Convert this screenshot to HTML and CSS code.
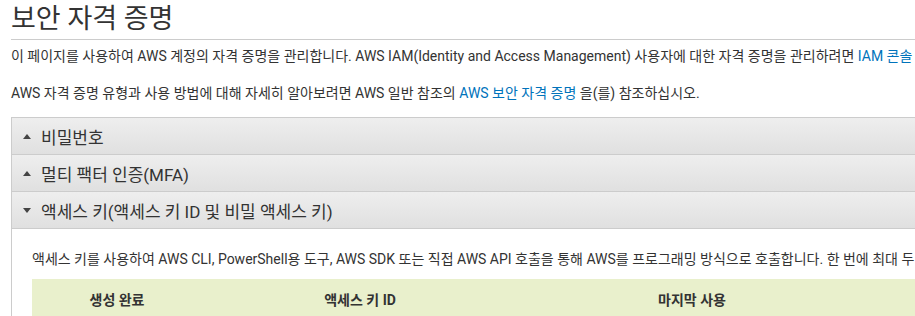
FILE: index.html
```html
<!DOCTYPE html>
<html lang="ko">
<head>
    <meta charset="UTF-8">
    <title>보안 자격 증명</title>
    <link rel="stylesheet" href="styles.css">
</head>
<body>
    <div class="page">
        <h1>보안 자격 증명</h1>
        <p class="intro">이 페이지를 사용하여 AWS 계정의 자격 증명을 관리합니다. AWS IAM(Identity and Access Management) 사용자에 대한 자격 증명을 관리하려면 <a href="#">IAM 콘솔</a></p>
        <p class="intro">AWS 자격 증명 유형과 사용 방법에 대해 자세히 알아보려면 AWS 일반 참조의 <a href="#">AWS 보안 자격 증명</a> 을(를) 참조하십시오.</p>

        <div class="accordion">
            <div class="acc-head"><span class="arrow up"></span>비밀번호</div>
            <div class="acc-head"><span class="arrow up"></span>멀티 팩터 인증(MFA)</div>
            <div class="acc-head"><span class="arrow down"></span>액세스 키(액세스 키 ID 및 비밀 액세스 키)</div>
            <div class="acc-body">
                <p>액세스 키를 사용하여 AWS CLI, PowerShell용 도구, AWS SDK 또는 직접 AWS API 호출을 통해 AWS를 프로그래밍 방식으로 호출합니다. 한 번에 최대 두</p>
                <table class="keys">
                    <thead>
                        <tr>
                            <th class="c1">생성 완료</th>
                            <th class="c2">액세스 키 ID</th>
                            <th class="c3">마지막 사용</th>
                            <th class="c4"></th>
                        </tr>
                    </thead>
                </table>
            </div>
        </div>
    </div>
</body>
</html>
```

FILE: styles.css
```css
body {
    margin: 0;
    font-family: Roboto, "Noto Sans CJK KR", sans-serif;
    color: #333;
    background-color: white;
    overflow: hidden;
}

.page {
    padding-left: 11px;
    width: 904px;
    overflow: hidden;
}

h1 {
    margin: 0;
    padding-top: 1px;
    font-size: 27px;
    font-weight: 400;
    line-height: 36px;
    color: #333;
    border-bottom: 1px solid #ccc;
    padding-bottom: 2px;
}

.intro {
    margin: 0;
    font-size: 14px;
    line-height: 37px;
    white-space: nowrap;
}

.intro:first-of-type {
    margin-top: -2px;
}

a {
    color: #0073bb;
    text-decoration: none;
}

.accordion {
    margin-top: 5px;
}

.acc-head {
    display: flex;
    align-items: center;
    height: 36px;
    padding-left: 11px;
    font-size: 17px;
    color: #333;
    background: linear-gradient(#eeeeee, #e0e0e0);
    border-top: 1px solid #ccc;
    border-left: 1px solid #ccc;
}

.acc-head:nth-child(3) {
    border-bottom: 1px solid #ccc;
}

.arrow {
    width: 0;
    height: 0;
    border-left: 4px solid transparent;
    border-right: 4px solid transparent;
    margin-right: 10px;
}

.arrow.up {
    border-bottom: 5px solid #444;
}

.arrow.down {
    border-top: 5px solid #444;
}

.acc-body {
    border-left: 1px solid #ccc;
    padding: 19px 0 0 20px;
}

.acc-body p {
    margin: 0 0 9px;
    font-size: 14px;
    line-height: 22px;
    white-space: nowrap;
}

.keys {
    border-collapse: collapse;
    width: 883px;
    table-layout: fixed;
}

.keys th {
    background-color: #e9f0cc;
    font-size: 14px;
    font-weight: 700;
    height: 40px;
    padding: 0;
    text-align: center;
    color: #333;
}

.c1 { width: 170px; }
.c2 { width: 316px; }
.c3 { width: 348px; }
.c4 { width: 49px; }
```
